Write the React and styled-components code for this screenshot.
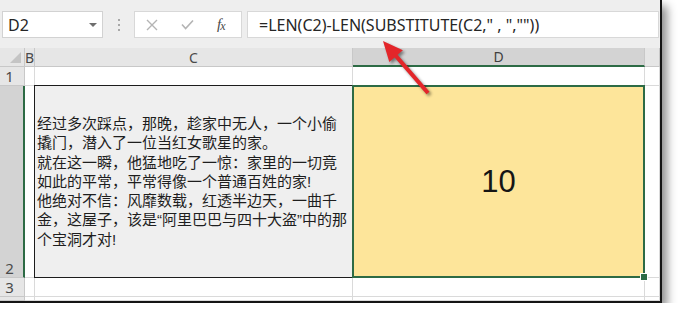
import React from 'react';
import styled, { createGlobalStyle } from 'styled-components';

const Global = createGlobalStyle`
  html, body { margin: 0; padding: 0; background: #ffffff; }
  body { font-family: "Noto Sans", "Liberation Sans", sans-serif; }
`;

const Frame = styled.div`
  position: relative;
  width: 662px;
  height: 303px;
  box-sizing: border-box;
  border-right: 2px solid #151515;
  border-bottom: 2px solid #151515;
  box-shadow: 5px 6px 9px rgba(0, 0, 0, 0.45);
  display: flex;
  flex-direction: column;
  background: #fff;
`;

const Toolbar = styled.div`
  height: 48px;
  box-sizing: border-box;
  background: #eeeeee;
  display: flex;
  align-items: flex-start;
  padding: 11px 1px 0 2px;
`;

const NameBox = styled.div`
  width: 101px;
  height: 27px;
  box-sizing: border-box;
  background: #fff;
  border: 1px solid #d2d2d2;
  display: flex;
  align-items: center;
  justify-content: space-between;
  padding: 0 5px 0 5px;
  font-size: 16px;
  color: #262626;
`;

const DropArrow = styled.span`
  width: 0;
  height: 0;
  border-left: 4px solid transparent;
  border-right: 4px solid transparent;
  border-top: 4px solid #6e6e6e;
`;

const Grip = styled.div`
  width: 31px;
  height: 27px;
  display: flex;
  flex-direction: column;
  align-items: center;
  justify-content: center;
  gap: 3px;
`;

const GripDot = styled.span`
  width: 2px;
  height: 2px;
  background: #a8a8a8;
`;

const FxBox = styled.div`
  width: 108px;
  height: 27px;
  box-sizing: border-box;
  background: #fff;
  border: 1px solid #d8d8d8;
  display: flex;
  align-items: center;
  padding-left: 11px;
  gap: 23px;
`;

const Fx = styled.span`
  font-family: "Liberation Serif", serif;
  font-style: italic;
  font-size: 15px;
  color: #4a4a4a;
  letter-spacing: -1px;
`;

const FxSub = styled.span`
  font-size: 12px;
  position: relative;
  top: 1px;
`;

const FormulaBox = styled.div`
  flex: 1;
  margin-left: 5px;
  height: 27px;
  box-sizing: border-box;
  background: #fff;
  border: 1px solid #d8d8d8;
  display: flex;
  align-items: center;
  padding-left: 11px;
  font-size: 16px;
  color: #262626;
  white-space: pre;
`;

const Sheet = styled.div`
  display: grid;
  grid-template-columns: 25px 10px 318px 292px 15px;
  grid-template-rows: 19px 19px 192px 19px 4px;
`;

const Corner = styled.div`
  box-sizing: border-box;
  background: #e6e6e6;
  border-right: 1px solid #c8c8c8;
  border-bottom: 1px solid #c8c8c8;
  display: flex;
  align-items: flex-end;
  justify-content: flex-end;
  padding: 0 3px 3px 0;
`;

const CornerTri = styled.span`
  width: 0;
  height: 0;
  border-left: 11px solid transparent;
  border-bottom: 11px solid #c4c4c4;
`;

const ColHead = styled.div`
  box-sizing: border-box;
  background: ${p => (p.$selected ? '#d3d3d3' : '#e6e6e6')};
  border-right: 1px solid #c8c8c8;
  border-bottom: ${p => (p.$selected ? '2px solid #2d6b45' : '1px solid #c8c8c8')};
  display: flex;
  align-items: center;
  justify-content: center;
  font-size: 14px;
  color: ${p => (p.$selected ? '#3f3f3f' : '#4a4a4a')};
  overflow: hidden;
`;

const RowHead = styled.div`
  box-sizing: border-box;
  background: ${p => (p.$selected ? '#d3d3d3' : '#e6e6e6')};
  border-right: ${p => (p.$selected ? '2px solid #2d6b45' : '1px solid #c8c8c8')};
  border-bottom: 1px solid #c8c8c8;
  display: flex;
  align-items: flex-end;
  justify-content: center;
  padding-right: ${p => (p.$selected ? '4px' : '5px')};
  font-size: 15px;
  line-height: 17px;
  color: #4a4a4a;
  overflow: hidden;
`;

const Cell = styled.div`
  box-sizing: border-box;
  background: #fff;
  border-right: 1px solid #dadada;
  border-bottom: 1px solid #dadada;
`;

const TextCell = styled.div`
  box-sizing: border-box;
  background: #efefef;
  border: 1px solid #1c1c1c;
  margin-left: -1px;
  margin-top: -1px;
  display: flex;
  flex-direction: column;
  justify-content: center;
  padding: 0 0 0 2px;
  font-family: "Liberation Sans", "Noto Sans CJK SC", sans-serif;
  font-size: 15px;
  line-height: 19.2px;
  color: #1e1e1e;
`;

const Line = styled.div`
  white-space: nowrap;
`;

const ResultCell = styled.div`
  position: relative;
  box-sizing: border-box;
  background: #fde59a;
  border: 2px solid #2d6b45;
  margin-left: -1px;
  margin-top: -1px;
  display: flex;
  align-items: center;
  justify-content: center;
  font-family: "Liberation Sans", sans-serif;
  font-size: 31px;
  color: #151515;
`;

const FillHandle = styled.span`
  position: absolute;
  right: -5px;
  bottom: -5px;
  width: 6px;
  height: 6px;
  background: #2d6b45;
  border: 1px solid #fff;
`;

const ArrowLayer = styled.svg`
  position: absolute;
  left: 0;
  top: 0;
  width: 660px;
  height: 301px;
  pointer-events: none;
  overflow: visible;
  filter: drop-shadow(2px 2px 1.5px rgba(0, 0, 0, 0.45));
`;

const lines = [
  '经过多次踩点，那晚，趁家中无人，一个小偷',
  '撬门，潜入了一位当红女歌星的家。',
  '就在这一瞬，他猛地吃了一惊：家里的一切竟',
  '如此的平常，平常得像一个普通百姓的家!',
  '他绝对不信：风靡数载，红透半边天，一曲千',
  '金，这屋子，该是“阿里巴巴与四十大盗”中的那',
  '个宝洞才对!',
];

export default function App() {
  return (
    <>
      <Global />
      <Frame>
        <Toolbar>
          <NameBox>
            <span>D2</span>
            <DropArrow />
          </NameBox>
          <Grip>
            <GripDot />
            <GripDot />
            <GripDot />
          </Grip>
          <FxBox>
            <svg width="12" height="12" viewBox="0 0 12 12">
              <path d="M1 1 L11 11 M11 1 L1 11" stroke="#b4b4b4" strokeWidth="1.4" fill="none" />
            </svg>
            <svg width="13" height="11" viewBox="0 0 13 11">
              <path d="M1 5.5 L4.6 9.5 L12 1.5" stroke="#b4b4b4" strokeWidth="1.6" fill="none" />
            </svg>
            <Fx>
              f<FxSub>x</FxSub>
            </Fx>
          </FxBox>
          <FormulaBox>{'=LEN(C2)-LEN(SUBSTITUTE(C2," , ",""))'}</FormulaBox>
        </Toolbar>
        <Sheet>
          <Corner>
            <CornerTri />
          </Corner>
          <ColHead>B</ColHead>
          <ColHead>C</ColHead>
          <ColHead $selected>D</ColHead>
          <ColHead />

          <RowHead>1</RowHead>
          <Cell />
          <Cell />
          <Cell />
          <Cell />

          <RowHead $selected>2</RowHead>
          <Cell />
          <TextCell>
            {lines.map((l, i) => (
              <Line key={i}>{l}</Line>
            ))}
          </TextCell>
          <ResultCell>
            10
            <FillHandle />
          </ResultCell>
          <Cell />

          <RowHead>3</RowHead>
          <Cell />
          <Cell />
          <Cell />
          <Cell />

          <RowHead />
          <Cell />
          <Cell />
          <Cell />
          <Cell />
        </Sheet>
        <ArrowLayer viewBox="0 0 660 301">
          <polygon
            points="429.5,91.7 397.6,54.8 402.9,50.2 383,41 389.3,62 394.6,57.4 426.5,94.3"
            fill="#e3262a"
          />
        </ArrowLayer>
      </Frame>
    </>
  );
}
